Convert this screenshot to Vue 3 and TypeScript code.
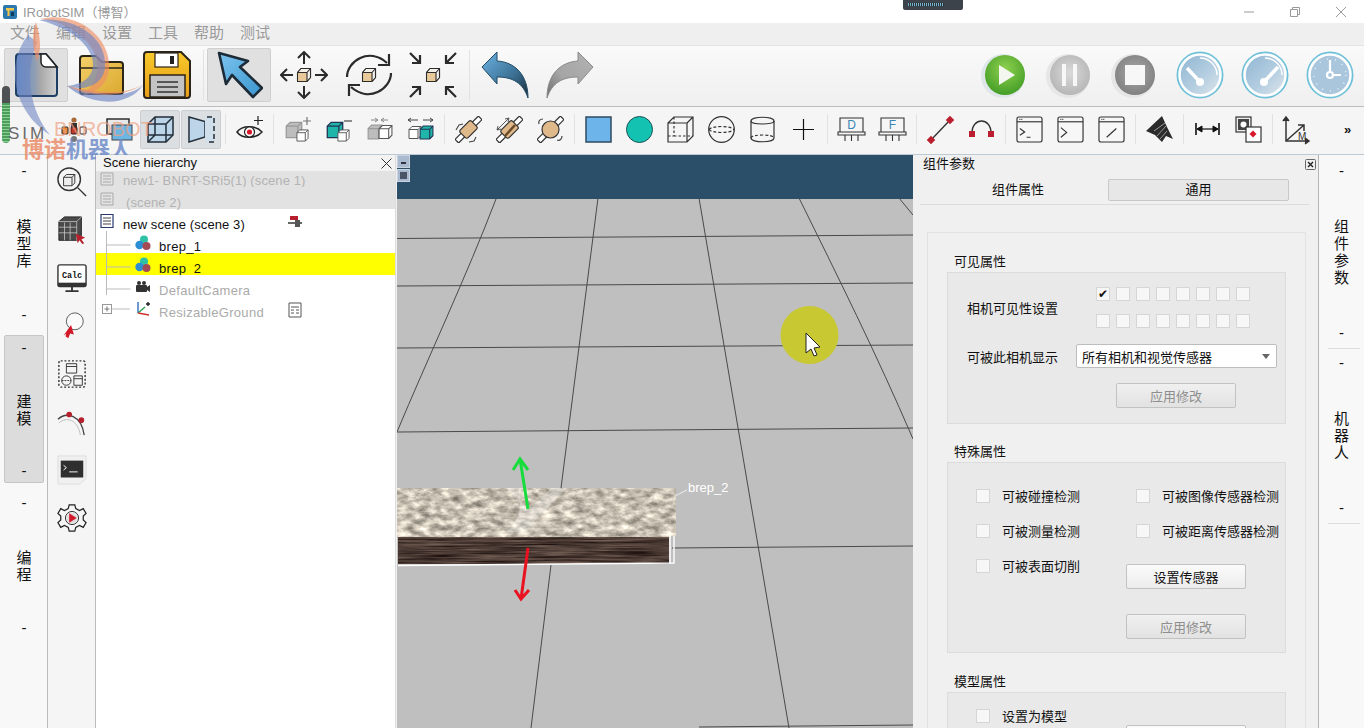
<script setup lang="ts">
const menus: string[] = ['文件', '编辑', '设置', '工具', '帮助', '测试']
const checks: number[] = Array.from({ length: 16 }, (_, i) => i)
</script>

<template>
  <div class="app">
    <svg class="defs" width="0" height="0" aria-hidden="true">
      <defs>
        <linearGradient id="gFile" x1="0" x2="1" y1="0" y2="0"><stop offset="0" stop-color="#5b8ec8"/><stop offset=".45" stop-color="#8f9db4"/><stop offset=".6" stop-color="#a8a8a8"/><stop offset="1" stop-color="#d2d2d2"/></linearGradient>
        <linearGradient id="gFolder" x1="0" x2="1" y1="0" y2="1"><stop offset="0" stop-color="#f4d06a"/><stop offset="1" stop-color="#dba92f"/></linearGradient>
        <linearGradient id="gSave" x1="0" x2="0" y1="0" y2="1"><stop offset="0" stop-color="#f7c92b"/><stop offset="1" stop-color="#e89d17"/></linearGradient>
        <linearGradient id="gArrow" x1="0" x2="1" y1="0" y2="1"><stop offset="0" stop-color="#7cc3ee"/><stop offset="1" stop-color="#3a96cf"/></linearGradient>
        <linearGradient id="gUndo" x1="0" x2="1" y1="0" y2="1"><stop offset="0" stop-color="#6db4e4"/><stop offset=".6" stop-color="#3a6f92"/><stop offset="1" stop-color="#1c2a36"/></linearGradient>
        <linearGradient id="gRedo" x1="1" x2="0" y1="0" y2="1"><stop offset="0" stop-color="#b3b3b3"/><stop offset=".6" stop-color="#a5a5a5"/><stop offset="1" stop-color="#6b6b6b"/></linearGradient>
        <radialGradient id="gPlay" cx=".5" cy=".35" r=".7"><stop offset="0" stop-color="#8ed04e"/><stop offset="1" stop-color="#3f9a24"/></radialGradient>
        <radialGradient id="gPause" cx=".5" cy=".45" r=".6"><stop offset="0" stop-color="#dadada"/><stop offset="1" stop-color="#b3b3b3"/></radialGradient>
        <radialGradient id="gStop" cx=".5" cy=".45" r=".6"><stop offset="0" stop-color="#a8a8a8"/><stop offset="1" stop-color="#7e7e7e"/></radialGradient>
        <linearGradient id="gGauge" x1="0" x2="1" y1="0" y2="1"><stop offset="0" stop-color="#8fb6d2"/><stop offset=".55" stop-color="#b3cde0"/><stop offset="1" stop-color="#dfe7ec"/></linearGradient>
        <filter id="marble" x="0" y="0" width="100%" height="100%" color-interpolation-filters="sRGB">
          <feTurbulence type="fractalNoise" baseFrequency="0.09 0.17" numOctaves="5" seed="7"/>
          <feColorMatrix values=".8 0 0 0 .38  .78 0 0 0 .36  .75 0 0 0 .32  0 0 0 0 1"/>
        </filter>
        <filter id="wood" x="0" y="0" width="100%" height="100%" color-interpolation-filters="sRGB">
          <feTurbulence type="fractalNoise" baseFrequency="0.015 0.55" numOctaves="4" seed="3"/>
          <feColorMatrix values=".55 0 0 0 .02  .5 0 0 0 -.02  .45 0 0 0 -.02  0 0 0 0 1"/>
        </filter>
        <symbol id="cube" viewBox="0 0 16 16">
          <path d="M1.500 5.500 5 1.500h9.500v9L11 14.500H1.500z" fill="#e9c99a" stroke="#2d2d2d" stroke-width="1.100" stroke-linejoin="round"/>
          <path d="M5 1.500h9.500L11 5.500H1.500zM11 5.500l3.500-4v9L11 14.500z" fill="#f4f0ea" stroke="#2d2d2d" stroke-width="1.100" stroke-linejoin="round"/>
        </symbol>
        <symbol id="greyCube" viewBox="0 0 14 14">
          <path d="M1 4 4 1h9v9l-3 3H1z" fill="#bdbdbd" stroke="#9a9a9a"/>
          <path d="M1 4h9v9M10 4l3-3" fill="none" stroke="#9a9a9a"/>
        </symbol>
        <symbol id="whiteCube" viewBox="0 0 14 14">
          <path d="M1 4 4 1h9v9l-3 3H1z" fill="#fff" stroke="#555"/>
          <path d="M1 4h9v9M10 4l3-3" fill="none" stroke="#555"/>
        </symbol>
        <symbol id="tealCube" viewBox="0 0 14 14">
          <path d="M1 4 4 1h9v9l-3 3H1z" fill="#1fb5a8" stroke="#235"/>
          <path d="M1 4h9v9M10 4l3-3" fill="none" stroke="#235"/>
        </symbol>
        <symbol id="brep" viewBox="0 0 16 16">
          <circle cx="9" cy="4.500" r="4" fill="#2fc0a8"/>
          <circle cx="4.500" cy="10" r="4.200" fill="#2c8fd6"/>
          <circle cx="11.500" cy="11" r="4" fill="#a34a55"/>
        </symbol>
        <symbol id="term" viewBox="0 0 28 28">
          <rect x="1" y="1" width="26" height="26" rx="2" fill="#f7f7f7" stroke="#333" stroke-width="1.200"/>
          <path d="M1 6h26" stroke="#333"/>
          <path d="M3.500 3.500h4" stroke="#333" stroke-dasharray="1 1"/>
        </symbol>
        <symbol id="shaft" viewBox="0 0 27 27">
          <g transform="rotate(-45 13.500 13.500)">
            <rect x="-3" y="11" width="33" height="5" rx="1" fill="#fff" stroke="#333" stroke-width="1.200"/>
          </g>
        </symbol>
      </defs>
    </svg>

    <header class="title-bar">
      <svg class="app-logo" viewBox="0 0 14 14"><rect width="14" height="14" rx="2" fill="#2a78ad"/><path d="M3 3h8v2.500H6.500V11H4.500V5.500H3z" fill="#f1c84a"/><path d="M8 7h3v4H8z" fill="#103a5c"/></svg>
      <span class="app-name">IRobotSIM（博智）</span>
      <div class="device">
        <span class="device-led"></span>
      </div>
      <div class="win-controls">
        <svg class="win-btn" viewBox="0 0 12 12"><path d="M1 6h10" stroke="#999"/></svg>
        <svg class="win-btn" viewBox="0 0 12 12"><path d="M3.500 3.500v-2h7v7h-2M1.500 3.500h7v7h-7z" fill="none" stroke="#999"/></svg>
        <svg class="win-btn" viewBox="0 0 12 12"><path d="M1 1l10 10M11 1 1 11" stroke="#999"/></svg>
      </div>
    </header>

    <nav class="menu-bar">
      <span v-for="m in menus" :key="m" class="menu-item">{{ m }}</span>
    </nav>

    <div class="toolbar-main">
      <button class="big active">
        <svg viewBox="0 0 48 48"><path d="M7 3h27l11 13v26a3 3 0 0 1-3 3H7a3 3 0 0 1-3-3V6a3 3 0 0 1 3-3z" fill="url(#gFile)" stroke="#1e3f63" stroke-width="2"/><path d="M29 3h5l11 13H34a5 5 0 0 1-5-5z" fill="#fff" stroke="#222" stroke-width="1.500"/></svg>
      </button>
      <button class="big plain folder">
        <svg viewBox="0 0 48 48"><path d="M3 8a3 3 0 0 1 3-3h13l6 6h18a3 3 0 0 1 3 3v26a3 3 0 0 1-3 3H6a3 3 0 0 1-3-3z" fill="url(#gFolder)" stroke="#2b2418" stroke-width="2"/><path d="M3 17h43" stroke="#2b2418" stroke-width="1.600"/></svg>
      </button>
      <button class="big plain save">
        <svg viewBox="0 0 48 48"><path d="M4 1h34l9 9v34a3 3 0 0 1-3 3H4a3 3 0 0 1-3-3V4a3 3 0 0 1 3-3z" fill="url(#gSave)" stroke="#2b2418" stroke-width="2"/><rect x="12" y="2" width="23" height="14" fill="#fff" stroke="#2b2418" stroke-width="1.200"/><rect x="27" y="5" width="4" height="8" fill="#222"/><rect x="7" y="24" width="35" height="22" fill="#c3c3c3" stroke="#2b2418" stroke-width="1.500"/><path d="M14 31h21M14 36h21M14 41h21" stroke="#333" stroke-width="1.300"/></svg>
      </button>
      <span class="vsep big-sep"></span>
      <button class="big active select">
        <svg viewBox="0 0 48 48"><path d="M3 2 32 10 24 16 46 37 37 46 16 24 10 33z" transform="translate(1 0)" fill="url(#gArrow)" stroke="#1d2b38" stroke-width="2.600" stroke-linejoin="round"/></svg>
      </button>
      <button class="big plain move">
        <svg viewBox="0 0 48 48" fill="none" stroke="#2b2b2b" stroke-width="2"><path d="M24 1v12M18 7l6-6 6 6M24 35v12M18 41l6 6 6-6M1 24h12M7 18l-6 6 6 6M35 24h12M41 18l6 6-6 6"/><use href="#cube" x="16" y="16" width="16" height="16"/></svg>
      </button>
      <button class="big plain rotate">
        <svg viewBox="0 0 48 48" fill="none" stroke="#2b2b2b" stroke-width="2.200"><path d="M2 26C2 10 24-4 42 12M46 22C46 38 24 52 6 36"/><path d="M44 3v11H33M4 45V34h11"/><use href="#cube" x="16" y="16" width="16" height="16"/></svg>
      </button>
      <button class="big plain scale">
        <svg viewBox="0 0 48 48" fill="none" stroke="#2b2b2b" stroke-width="2.200"><path d="M1 2 11 12M3 12h8V4M47 2 37 12M45 12h-8V4M1 46l10-10M3 36h8v8M47 46 37 36M45 36h-8v8"/><use href="#cube" x="16" y="16" width="16" height="16"/></svg>
      </button>
      <span class="vsep big-sep scale-sep"></span>
      <button class="big plain undo">
        <svg viewBox="0 0 48 48"><path d="M1 16 16 1v9C34 11 47 24 47 47 42 32 32 26 16 26v7z" fill="url(#gUndo)" stroke="#214a66"/></svg>
      </button>
      <button class="big plain redo">
        <svg viewBox="0 0 48 48"><path d="M47 16 32 1v9C14 11 1 24 1 47 6 32 16 26 32 26v7z" fill="url(#gRedo)" stroke="#8b8b8b"/></svg>
      </button>
      <div class="sim-controls">
        <svg class="ctl" viewBox="0 0 50 50"><circle cx="23" cy="26" r="22" fill="#dfe6ea"/><circle cx="25" cy="25" r="20" fill="url(#gPlay)"/><path d="M19 15 35 25 19 35z" fill="#f4f7f0"/></svg>
        <svg class="ctl" viewBox="0 0 50 50"><circle cx="23" cy="26" r="22" fill="#e6e6e6"/><circle cx="25" cy="25" r="20" fill="url(#gPause)"/><path d="M17 14h4v22h-4zM28 14h4v22h-4z" fill="#f7f7f7"/></svg>
        <svg class="ctl" viewBox="0 0 50 50"><circle cx="23" cy="26" r="22" fill="#e6e6e6"/><circle cx="25" cy="25" r="20" fill="url(#gStop)"/><rect x="15" y="15" width="20" height="20" fill="#f7f7f7"/></svg>
        <svg class="ctl" viewBox="0 0 50 50" fill="none"><circle cx="25" cy="25" r="23.500" fill="#6fc0d8"/><circle cx="25" cy="25" r="20.500" fill="url(#gGauge)" stroke="#fff" stroke-width="2.500"/><path d="M25 8a17 17 0 0 1 17 17" stroke="#fff" stroke-width="1.500"/><path d="M25 32 12 18" stroke="#fff" stroke-width="3.500"/><circle cx="25" cy="32" r="4" fill="#fff"/></svg>
        <svg class="ctl" viewBox="0 0 50 50" fill="none"><circle cx="25" cy="25" r="23.500" fill="#6fc0d8"/><circle cx="25" cy="25" r="20.500" fill="url(#gGauge)" stroke="#fff" stroke-width="2.500"/><path d="M25 8a17 17 0 0 1 17 17" stroke="#fff" stroke-width="1.500"/><path d="M24 32 38 17" stroke="#fff" stroke-width="3.500"/><circle cx="24" cy="32" r="4" fill="#fff"/></svg>
        <svg class="ctl" viewBox="0 0 50 50" fill="none"><circle cx="25" cy="25" r="23.500" fill="#6fc0d8"/><circle cx="25" cy="25" r="20.500" fill="#a9c6dc" stroke="#fff" stroke-width="2.500"/><path d="M25 10v12M28 25h8" stroke="#fff" stroke-width="2.200"/><circle cx="25" cy="25" r="3" stroke="#fff" stroke-width="2.200"/><circle cx="25" cy="25" r="16" stroke="#e8f2f8" stroke-width="1.500" stroke-dasharray="1 7"/></svg>
      </div>
    </div>

    <div class="toolbar-icons">
      <div class="cell parts">
        <svg viewBox="0 0 27 27"><circle cx="13" cy="4" r="2.600" fill="#a86b3c"/><rect x="10" y="7" width="6" height="6" fill="#333"/><rect x="1" y="11" width="6" height="7" rx="1" fill="#e8893a" stroke="#222"/><rect x="10" y="11" width="6" height="7" rx="1" fill="#c0392b" stroke="#222"/><rect x="19" y="11" width="6" height="7" rx="1" fill="#f0f0f0" stroke="#222"/><circle cx="13" cy="23" r="3" fill="#777"/></svg>
      </div>
      <div class="cell">
        <svg viewBox="0 0 27 27"><rect x="1" y="3" width="22" height="15" fill="#e8e8e8" stroke="#222" stroke-width="1.400"/><rect x="6" y="9" width="20" height="15" fill="#6cb6e4" stroke="#444"/></svg>
      </div>
      <div class="cell on">
        <svg viewBox="0 0 27 27" fill="none" stroke="#222e3a" stroke-width="1.500"><path d="M1 8 8 1h18v18l-7 7H1z" fill="#bcd5e8"/><path d="M1 8h18v18M19 8l7-7M8 1v18H1M8 19h18M8 19l-7 7"/></svg>
      </div>
      <div class="cell on">
        <svg viewBox="0 0 27 27" fill="none" stroke="#222e3a" stroke-width="1.500"><path d="M1 1 17 5.500v15.500L1 26z" fill="#bcd5e8"/><rect x="17" y="1" width="9" height="25" fill="#cfe0ec" stroke="none"/><path d="M19 1h7v25h-7" stroke-dasharray="5 3"/></svg>
      </div>
      <span class="vsep"></span>
      <div class="cell">
        <svg viewBox="0 0 27 27" fill="none"><path d="M1 16C6 9 20 9 26 16 20 23 6 23 1 16z" stroke="#222" stroke-width="1.500"/><circle cx="13.500" cy="16" r="5" fill="#fff" stroke="#222" stroke-width="1.200"/><circle cx="13.500" cy="16" r="2.600" fill="#d8182a"/><path d="M22 0v9M18 4.500h9" stroke="#222" stroke-width="1.200"/></svg>
      </div>
      <span class="vsep"></span>
      <div class="cell"><svg viewBox="0 0 27 27" fill="none"><use href="#greyCube" x="1" y="5" width="18" height="18"/><use href="#whiteCube" x="12" y="13" width="13" height="13"/><path d="M23 1v8M19 5h8" stroke="#777" stroke-width="1.200"/></svg></div>
      <div class="cell"><svg viewBox="0 0 27 27" fill="none"><use href="#tealCube" x="1" y="5" width="18" height="18"/><use href="#whiteCube" x="12" y="13" width="13" height="13"/><path d="M19 5h8" stroke="#444" stroke-width="1.200"/></svg></div>
      <div class="cell"><svg viewBox="0 0 27 27" fill="none"><use href="#greyCube" x="1" y="8" width="16" height="16"/><use href="#whiteCube" x="12" y="8" width="15" height="16"/><path d="M5 4h7M9 2l3 2-3 2M22 4h-7M18 2l-3 2 3 2" stroke="#888"/></svg></div>
      <div class="cell"><svg viewBox="0 0 27 27" fill="none"><use href="#whiteCube" x="1" y="9" width="14" height="15"/><use href="#tealCube" x="12" y="9" width="15" height="15"/><path d="M1 4h10M4 2 1 4l3 2M16 4h10M23 2l3 2-3 2" stroke="#444"/></svg></div>
      <span class="vsep"></span>
      <div class="cell"><svg viewBox="0 0 27 27" fill="none"><use href="#shaft" width="27" height="27"/><rect x="5.500" y="8" width="16" height="11" rx="2" fill="#e0b98a" stroke="#333" stroke-width="1.200" transform="rotate(-45 13.500 13.500)"/><path d="M1 14l3-5 4-1M14 26l5-1 2-4" stroke="#444" stroke-width="1.100"/></svg></div>
      <div class="cell"><svg viewBox="0 0 27 27" fill="none"><use href="#shaft" width="27" height="27"/><rect x="5.500" y="8" width="16" height="11" rx="2" fill="#e0b98a" stroke="#333" stroke-width="1.200" transform="rotate(-45 13.500 13.500)"/><path d="M9 20 19 9" stroke="#6a4a28" stroke-width="2.500"/><path d="M1 14 13 2M1 14l1-4M1 14l4-1M13 2l-4 1M13 2l-1 4" stroke="#555"/></svg></div>
      <div class="cell"><svg viewBox="0 0 27 27" fill="none"><use href="#shaft" width="27" height="27"/><circle cx="13.500" cy="13.500" r="8.500" fill="#e0b98a" stroke="#333" stroke-width="1.200"/><path d="M2 8C1 5 3 3 6 3M20 24c3 1 5-1 5-4" stroke="#444" stroke-width="1.200"/></svg></div>
      <span class="vsep"></span>
      <div class="cell"><svg viewBox="0 0 27 27"><rect x="1" y="1" width="25" height="25" fill="#6cb4ea" stroke="#2e4a60" stroke-width="1.500"/></svg></div>
      <div class="cell"><svg viewBox="0 0 27 27"><circle cx="13.500" cy="13.500" r="13" fill="#14c2b2" stroke="#1f4f55" stroke-width="1"/></svg></div>
      <div class="cell"><svg viewBox="0 0 27 27" fill="none" stroke="#333" stroke-width="1.200"><path d="M1 7 7 1h19v19l-6 6H1zM1 7h19v19M20 7l6-6"/><path d="M7 1v19H1M7 20h19" stroke-dasharray="2.500 2"/></svg></div>
      <div class="cell"><svg viewBox="0 0 27 27" fill="none" stroke="#333" stroke-width="1.200"><circle cx="13.500" cy="13.500" r="12.800"/><path d="M1 13.500c3 4 22 4 25 0M1 13.500c3-4 22-4 25 0" stroke-dasharray="3 2"/></svg></div>
      <div class="cell"><svg viewBox="0 0 27 27" fill="none" stroke="#333" stroke-width="1.200"><path d="M2 5c0-5 23-5 23 0v17c0 5-23 5-23 0z"/><path d="M2 5c0 4 23 4 23 0"/><path d="M2 22c0-4 23-4 23 0" stroke-dasharray="3 2"/></svg></div>
      <div class="cell"><svg viewBox="0 0 27 27"><path d="M3 13.500h21M13.500 3v21" stroke="#111" stroke-width="1.200"/></svg></div>
      <span class="vsep"></span>
      <div class="cell"><svg viewBox="0 0 27 27" fill="none" stroke="#333" stroke-width="1.100"><path d="M2 2h23v14H2zM0 16h27v3H0zM7 19v6M13.500 19v6M20 19v6"/><text x="13.500" y="13" text-anchor="middle" class="chip" stroke="none">D</text></svg></div>
      <div class="cell"><svg viewBox="0 0 27 27" fill="none" stroke="#333" stroke-width="1.100"><path d="M2 2h23v14H2zM0 16h27v3H0zM7 19v6M13.500 19v6M20 19v6"/><text x="13.500" y="13" text-anchor="middle" class="chip" stroke="none">F</text></svg></div>
      <span class="vsep"></span>
      <div class="cell"><svg viewBox="0 0 27 27"><path d="M4 24 23 4" stroke="#333" stroke-width="1.400"/><rect x="1" y="21" width="6" height="6" fill="#bb1f2f" transform="rotate(45 4 24)"/><rect x="20" y="1" width="6" height="6" fill="#bb1f2f" transform="rotate(45 23 4)"/></svg></div>
      <div class="cell"><svg viewBox="0 0 27 27" fill="none"><path d="M4 17C4 1 23 1 23 17" stroke="#333" stroke-width="1.400"/><rect x="1" y="15" width="6" height="6" fill="#bb1f2f"/><rect x="20" y="15" width="6" height="6" fill="#bb1f2f"/></svg></div>
      <span class="vsep"></span>
      <div class="cell"><svg viewBox="0 0 28 28" fill="none" stroke="#333" stroke-width="1.200"><use href="#term" width="28" height="28"/><path d="M4 13l5 3.500-5 3.500M11 22h4"/></svg></div>
      <div class="cell"><svg viewBox="0 0 28 28" fill="none" stroke="#333" stroke-width="1.200"><use href="#term" width="28" height="28"/><path d="M4 12l6 5-6 5"/></svg></div>
      <div class="cell"><svg viewBox="0 0 28 28" fill="none" stroke="#333" stroke-width="1.200"><use href="#term" width="28" height="28"/><path d="M9 22l10-9"/></svg></div>
      <span class="vsep"></span>
      <div class="cell"><svg viewBox="0 0 27 27"><path d="M0 15 16 0l5 11 6 12-7-3-4 6-7-7z" fill="#2b2b2b"/><path d="M8 15l11-8M11 20l9-10M14 23l7-8" stroke="#999" stroke-width="1"/></svg></div>
      <span class="vsep"></span>
      <div class="cell"><svg viewBox="0 0 27 27" fill="none" stroke="#111"><path d="M2 7v12M25 7v12" stroke-width="1.600"/><path d="M3 13h21" stroke-width="1.200"/><path d="M3 13l5-3v6zM24 13l-5-3v6z" fill="#111"/></svg></div>
      <div class="cell"><svg viewBox="0 0 27 27" fill="none"><rect x="1" y="1" width="15" height="15" fill="#eee" stroke="#333" stroke-width="1.200"/><rect x="3" y="3" width="11" height="11" fill="#444"/><circle cx="8.500" cy="8.500" r="3" fill="#fff"/><rect x="11" y="11" width="15" height="15" fill="#fff" stroke="#333" stroke-width="1.200"/><rect x="15.500" y="15.500" width="5" height="5" fill="#d8182a" transform="rotate(45 18 18)"/></svg></div>
      <span class="vsep"></span>
      <div class="cell"><svg viewBox="0 0 27 27" fill="none" stroke="#333" stroke-width="1.500"><path d="M3 2v23h22"/><path d="M0 5l3-4 3 4M22 22l4 3-4 3" fill="#333"/><path d="M3 25 21 9M15 9h6v6"/><text x="15" y="24" class="chip dark" stroke="none">M</text></svg></div>
      <span class="more">»</span>
    </div>

    <div class="watermark" aria-hidden="true">
      <svg class="swoosh" viewBox="0 0 150 170" width="150" height="170">
        <path d="M40 19C78 10 112 38 109 70 107 85 97 92 82 96 93 86 99 76 97 62 93 38 66 22 40 19z" fill="#ec8f66" opacity=".65"/>
        <path d="M39 20C72 16 108 36 105 68 103 84 86 92 67 86 88 84 96 72 92 58 86 38 62 26 39 20z" fill="#6f86c3" opacity=".65"/>
        <path d="M67 86C90 92 125 102 143 85 128 108 90 106 67 86z" fill="#6f86c3" opacity=".65"/>
        <path d="M67 86C90 90 122 98 143 84 125 98 92 98 67 86z" fill="#ec8f66" opacity=".6"/>
        <path d="M28 35C4 66 14 112 50 135 30 110 24 75 37 42z" fill="#6f86c3" opacity=".6"/>
        <path d="M36 22C40 36 42 48 37 61 32 48 32 34 36 22z" fill="#ec8f66" opacity=".7"/>
      </svg>
      <div class="wm-meter"><span class="wm-dark"></span><span class="wm-green"></span></div>
      <span class="wm-sim">SIM</span>
      <span class="wm-brand">BNROBOT</span>
      <span class="wm-cn"><i class="or">博诺</i><i class="bl">机器人</i></span>
    </div>

    <main class="workspace">
      <aside class="left-tabs">
        <div class="vtab t1"><span>-</span><b>模型库</b><span>-</span></div>
        <div class="vtab t2 selected"><span>-</span><b>建模</b><span>-</span></div>
        <div class="vtab t3"><span>-</span><b>编程</b><span>-</span></div>
      </aside>

      <aside class="tool-col">
        <svg viewBox="0 0 32 32" fill="none" stroke="#333"><circle cx="13" cy="13" r="12" stroke-width="1.500"/><path d="M22 22l9 9" stroke-width="1.500"/><path d="M7 11l3-3h9v9l-3 3H7zM7 11h9v9M16 11l3-3" fill="#eee"/></svg>
        <svg viewBox="0 0 32 32"><path d="M2 7l6-5h18v20l-5 5H2z" fill="#4a4a4a" stroke="#222"/><path d="M8 8v19M14 8v19M2 13h19M2 19h19M21 7l5-5M2 7h19v20" stroke="#ccc" stroke-width=".8" fill="none"/><path d="M20 20l10 4-4 2 3 4-2 1-3-4-2 3z" fill="#b5202c"/></svg>
        <svg viewBox="0 0 32 32" fill="none"><rect x="1" y="2" width="30" height="23" rx="2" stroke="#333" stroke-width="1.500" fill="#fff"/><rect x="1" y="21" width="30" height="4" fill="#333"/><path d="M16 25v4M9 30h14" stroke="#333" stroke-width="2"/><text x="16" y="16" text-anchor="middle" class="calc">Calc</text></svg>
        <svg viewBox="0 0 32 32" fill="none"><circle cx="19" cy="11" r="9" stroke="#555" fill="#fafafa"/><path d="M7 26 15 15l3 10-4-1-2 5-3-2 1-3z" fill="#d3182a"/></svg>
        <svg viewBox="0 0 32 32" fill="none" stroke="#333"><rect x="2" y="2" width="28" height="28" rx="2" stroke-dasharray="2 2" stroke-width="1.500"/><path d="M10 5h11v10H10z"/><path d="M10 8h11"/><circle cx="10" cy="23" r="5"/><path d="M5 23h10" stroke-dasharray="2 1"/><path d="M18 18h9v10h-9z"/><path d="M18 21h9"/></svg>
        <svg viewBox="0 0 32 32" fill="none"><path d="M1 13C10 5 26 8 29 30" stroke="#444" stroke-width="1.400"/><path d="M2 17C10 10 22 13 25 30" stroke="#bbb"/><circle cx="13" cy="8" r="3" fill="#b5202c"/><circle cx="26" cy="14" r="3" fill="#b5202c"/></svg>
        <svg viewBox="0 0 32 32"><path d="M1 1h30v24l-7 6H1z" fill="#f0f0f0" stroke="#ddd"/><rect x="4" y="6" width="24" height="18" fill="#2f2f2f"/><path d="M7 11l3 2.500L7 16M13 18h9" stroke="#fff" fill="none"/></svg>
        <svg viewBox="0 0 32 32" fill="none"><path d="M13 2h6l1 4 4 2 4-2 3 5-3 3v4l3 3-3 5-4-2-4 2-1 4h-6l-1-4-4-2-4 2-3-5 3-3v-4L1 11l3-5 4 2 4-2z" stroke="#222" stroke-width="1.300"/><circle cx="16" cy="16" r="7" stroke="#222"/><circle cx="16" cy="16" r="5.500" fill="#ddd"/><path d="M13 11l8 5-8 5z" fill="#d3182a"/></svg>
      </aside>

      <section class="scene">
        <div class="scene-head">
          <span>Scene hierarchy</span>
          <svg class="scene-close" viewBox="0 0 11 11"><path d="M.5.500l10 10M10.500.500l-10 10" stroke="#333"/></svg>
        </div>
        <div class="tree">
          <svg class="tree-lines" width="40" height="130" viewBox="0 0 40 130">
            <path d="M10.500 0v64M10.500 14h24M10.500 36h24M10.500 58h24M16 78h18" stroke="#bbb" fill="none"/>
            <rect x="6.500" y="73.500" width="9" height="9" fill="#fff" stroke="#999"/>
            <path d="M8.500 78h5M11 75.500v5" stroke="#777"/>
          </svg>
          <div class="row dim grey first"><svg class="ic" viewBox="0 0 16 16" fill="none" stroke="#aaa"><path d="M2 2h12v12H2zM4 5h8M4 8h8M4 11h8"/></svg><span>new1- BNRT-SRi5(1) (scene 1)</span></div>
          <div class="row dim grey"><svg class="ic" viewBox="0 0 16 16" fill="none" stroke="#aaa"><path d="M2 2h12v12H2zM4 5h8M4 8h8M4 11h8"/></svg><span class="pad3">(scene 2)</span></div>
          <div class="row"><svg class="ic" viewBox="0 0 16 16" fill="none" stroke="#2a3a70" stroke-width="1.200"><path d="M2 1.500h12v13H2z"/><path d="M4 5h8M4 8h8M4 11h8" stroke="#444"/></svg><span>new scene (scene 3)</span><svg class="badge" viewBox="0 0 16 16"><rect x="3" y="2" width="8" height="4" fill="#b5202c"/><rect x="1" y="8" width="14" height="2" fill="#666"/><rect x="8" y="6" width="5" height="7" fill="#555"/></svg></div>
          <div class="row child above"><svg class="ic" viewBox="0 0 16 16"><use href="#brep" width="16" height="16"/></svg><span>brep_1</span></div>
          <div class="row child hit"><svg class="ic" viewBox="0 0 16 16"><use href="#brep" width="16" height="16"/></svg><span>brep_2</span></div>
          <div class="row child dim cover"><svg class="ic" viewBox="0 0 16 16"><rect x="1" y="6" width="11" height="7" rx="1" fill="#333"/><circle cx="4" cy="4" r="2" fill="#333"/><circle cx="9" cy="4" r="2" fill="#333"/><path d="M12 8l3-2v7l-3-2z" fill="#333"/></svg><span>DefaultCamera</span></div>
          <div class="row child dim"><svg class="ic" viewBox="0 0 16 16" fill="none" stroke-width="1.400"><path d="M3 12 3 1" stroke="#2a6fc0"/><path d="M3 12 10 6" stroke="#2aa050"/><path d="M3 12 14 14" stroke="#d03030"/><path d="M11 3h4M13 1v4" stroke="#222"/></svg><span>ResizableGround</span><svg class="badge" viewBox="0 0 16 16" fill="#fff" stroke="#555"><path d="M2 1h12v14H2z"/><path d="M4 5h8M4 8h3M9 8h3M4 11h3M9 11h3"/></svg></div>
        </div>
      </section>

      <section class="viewport">
        <svg class="world" viewBox="0 0 516 573" width="516" height="573">
          <rect x="0" y="0" width="516" height="573" fill="#bfbfbf"/>
          <rect x="0" y="0" width="516" height="44" fill="#2c4f69"/>
          <g stroke="#4a4a4a" fill="none" stroke-width="1">
            <path d="M0 83.500 516 80M0 131 516 128M0 193 516 190M0 277 516 273M275 393 516 391M302 572 516 570"/>
            <path d="M99 44C70 120 30 205 0 277"/>
            <path d="M201 43 164 333M154 410 134 573"/>
            <path d="M302 43 392 573"/>
            <path d="M402 43C440 120 480 200 516 284"/>
            <path d="M502 43 516 60"/>
          </g>
          <circle cx="412.500" cy="180" r="29" fill="#c8c832"/>
          <path d="M409 178v20l5-4 3 7 3-1-3-7 6-1z" fill="#fff" stroke="#222"/>
          <rect x="0" y="333" width="279" height="49" filter="url(#marble)"/>
          <path d="M110 333h14l-2 28-12 16h20l10-14 30-30h-16l-22 22z" fill="#fff" opacity=".3"/>
          <rect x="1" y="382" width="271" height="27" filter="url(#wood)"/>
          <path d="M1 410.500 277 408V381M273 381v27" stroke="#fff" stroke-width="1.400" fill="none"/>
          <path d="M278 341 290 335" stroke="#eee"/>
          <text x="291" y="337" class="lbl">brep_2</text>
          <path d="M131 354 123 304M116 315l7-11 8 11" stroke="#16dc3c" stroke-width="3" fill="none"/>
          <path d="M131 393 124 444M118 435l6 9 8-9" stroke="#ea1220" stroke-width="3" fill="none"/>
        </svg>
        <div class="view-btns">
          <span class="vbtn"><i class="dash"></i></span>
          <span class="vbtn"><i class="sq"></i></span>
        </div>
      </section>

      <section class="props">
        <div class="props-head">
          <span>组件参数</span>
          <svg class="props-close" viewBox="0 0 11 11"><rect x=".5" y=".5" width="10" height="10" rx="1" fill="#f0f0f0" stroke="#666"/><path d="M3 3l5 5M8 3 3 8" stroke="#222" stroke-width="1.400"/></svg>
        </div>
        <div class="tabs">
          <div class="tab">组件属性</div>
          <div class="tab cur">通用</div>
        </div>
        <div class="outer">
          <h4>可见属性</h4>
          <div class="box b1">
            <div class="line">
              <label class="lab l1">相机可见性设置</label>
              <div class="chk-grid">
                <span v-for="c in checks" :key="c" class="chk">{{ c === 0 ? '✔' : '' }}</span>
              </div>
            </div>
            <div class="line mt16">
              <label class="lab l2">可被此相机显示</label>
              <div class="combo"><span>所有相机和视觉传感器</span><i class="caret"></i></div>
            </div>
            <button class="btn off apply1">应用修改</button>
          </div>

          <h4 class="next">特殊属性</h4>
          <div class="box b2">
            <div class="col">
              <div class="opt"><span class="chk big-chk"></span>可被碰撞检测</div>
              <div class="opt"><span class="chk big-chk"></span>可被测量检测</div>
              <div class="opt"><span class="chk big-chk"></span>可被表面切削</div>
            </div>
            <div class="col">
              <div class="opt"><span class="chk big-chk"></span>可被图像传感器检测</div>
              <div class="opt"><span class="chk big-chk"></span>可被距离传感器检测</div>
              <button class="btn set">设置传感器</button>
              <button class="btn off apply2">应用修改</button>
            </div>
          </div>

          <h4 class="next n3">模型属性</h4>
          <div class="box b3">
            <div class="col">
              <div class="opt"><span class="chk big-chk"></span>设置为模型</div>
            </div>
            <div class="col"><button class="btn set model"></button></div>
          </div>
        </div>
      </section>

      <aside class="right-tabs">
        <div class="vtab r1"><span>-</span><b>组件参数</b><span>-</span></div>
        <hr />
        <div class="vtab r2"><span>-</span><b>机器人</b><span>-</span></div>
        <hr />
      </aside>
    </main>
  </div>
</template>

<style>
html, body { margin: 0; padding: 0; background: #fff; overflow: hidden; }
</style>

<style scoped>
* { box-sizing: border-box; }
.app { width: 1364px; height: 728px; overflow: hidden; position: relative; font-family: "Liberation Sans", "Noto Sans CJK SC", sans-serif; font-size: 13px; color: #111; background: #f0f0f0; }
.defs { position: absolute; }
button { font: inherit; padding: 0; }

.title-bar { height: 23px; background: #fff; display: flex; align-items: center; padding-left: 3px; position: relative; }
.app-logo { width: 14px; height: 14px; }
.app-name { margin-left: 6px; color: #999; font-size: 13px; }
.device { position: absolute; left: 903px; top: 0; width: 60px; height: 10px; background: #3c434b; border-radius: 0 0 2px 2px; padding: 3px 5px; }
.device-led { display: block; height: 3px; width: 36px; background: repeating-linear-gradient(90deg, #6fb3c9 0 1px, #2c3238 1px 2px); }
.win-controls { margin-left: auto; display: flex; padding-right: 17px; gap: 34px; align-items: center; height: 20px; }
.win-btn { width: 12px; height: 12px; }

.menu-bar { height: 20px; background: #efefef; display: flex; gap: 16px; padding-left: 10px; align-items: center; }
.menu-item { font-size: 15px; color: #9a9a9a; line-height: 20px; }

.toolbar-main { height: 62px; margin-top: 2px; border-top: 1px solid #e3e3e3; border-bottom: 1px solid #bdbdbd; background: linear-gradient(#fafafa, #efefef); display: flex; align-items: flex-start; padding-left: 4px; }
.big { width: 64px; height: 54px; margin-top: 2px; background: transparent; border: 0; display: flex; align-items: center; justify-content: center; flex: none; }
.big svg { width: 48px; height: 48px; }
.big.active { background: #e0e0e0; border: 1px solid #cfcfcf; border-radius: 2px; }
.big.plain { width: 48px; }
.folder { margin-left: 9px; }
.save { margin-left: 18px; }
.move { margin-left: 9px; }
.rotate, .redo { margin-left: 17px; }
.scale { margin-left: 16px; }
.vsep { display: block; width: 1px; height: 30px; margin: 0 3px; background: #e2e2e2; flex: none; align-self: center; }
.big-sep { height: 50px; margin: 4px 3px 0 12px; align-self: flex-start; }
.scale-sep { margin: 4px 0 0 12px; }
.undo { margin-left: 11px; }
.sim-controls { margin-left: auto; display: flex; gap: 15px; padding: 4px 9px 0 0; }
.ctl { width: 50px; height: 50px; }

.toolbar-icons { height: 48px; padding: 0 0 3px 54px; display: flex; align-items: center; background: #f5f5f5; border-bottom: 1px solid #bdc9d3; }
.cell { width: 41px; height: 39px; flex: none; display: flex; align-items: center; justify-content: center; }
.cell svg { width: 27px; height: 27px; overflow: visible; }
.cell.parts { margin-right: 4px; }
.cell.on { width: 40px; margin-right: 1px; background: #dcdfe1; border: 1px solid #cbcfd2; border-radius: 2px; }
.chip { font: 12px "Liberation Sans", sans-serif; fill: #3a85b5; }
.chip.dark { fill: #333; font-size: 10px; }
.more { margin-left: 27px; font: bold 13px "Liberation Sans", sans-serif; color: #111; }

.watermark { position: absolute; left: 0; top: 0; width: 150px; height: 170px; pointer-events: none; }
.swoosh { position: absolute; left: 0; top: 0; }
.wm-meter { position: absolute; left: 2px; top: 86px; width: 8px; height: 57px; border-radius: 4px; overflow: hidden; display: flex; flex-direction: column; }
.wm-dark { height: 17px; background: #4d5154; }
.wm-green { flex: 1; background: repeating-linear-gradient(#4c9f5b 0 2px, #8ccf96 2px 3px); }
.wm-sim { position: absolute; left: 8px; top: 126px; font-size: 17px; letter-spacing: 3px; color: #6b6b6b; line-height: 15px; }
.wm-brand { position: absolute; left: 54px; top: 120px; font-size: 20px; line-height: 18px; color: rgba(238, 160, 130, .7); }
.wm-cn { position: absolute; left: 22px; top: 141px; font-size: 22px; line-height: 18px; font-weight: 700; white-space: nowrap; }
.wm-cn i { font-style: normal; }
.or { color: rgba(235, 140, 105, .85); }
.bl { color: rgba(112, 140, 200, .85); }

.workspace { height: 573px; display: flex; align-items: stretch; }
.left-tabs { width: 48px; flex: none; background: #f8f8f8; border-right: 1px solid #bbb; padding: 8px 3px 0 4px; }
.vtab { display: flex; flex-direction: column; align-items: center; justify-content: space-between; font-size: 15px; }
.vtab span { line-height: 16px; height: 16px; }
.vtab b { font-weight: 400; width: 15px; line-height: 17px; word-break: break-all; text-align: center; }
.t1 { height: 160px; }
.t2 { height: 148px; margin-top: 12px; padding: 4px 0 3px; }
.t3 { height: 141px; margin-top: 12px; }
.selected { background: #dcdcdc; border: 1px solid #c6c6c6; border-radius: 2px; }

.tool-col { width: 48px; flex: none; background: #f5f5f5; border-right: 1px solid #bbb; padding-top: 12px; display: flex; flex-direction: column; align-items: center; gap: 18px; }
.tool-col svg { width: 30px; height: 30px; flex: none; }

.scene { width: 300px; flex: none; background: #fff; border-right: 1px solid #ddd; }
.scene-head { height: 16px; background: #f3f3f3; padding-left: 7px; line-height: 15px; font-size: 13px; position: relative; }
.scene-close { position: absolute; left: 285px; top: 3px; width: 11px; height: 11px; }
.tree { position: relative; }
.tree-lines { position: absolute; left: 0; top: 60px; z-index: 3; }
.row { height: 22px; display: flex; align-items: flex-start; padding: 4px 0 0 3px; gap: 8px; font-size: 13px; letter-spacing: .1px; position: relative; white-space: nowrap; }
.row span { line-height: 24px; height: 22px; }
.row .ic { width: 16px; height: 16px; flex: none; position: relative; }
.row.first { height: 16px; padding-top: 0; }
.row.first span { line-height: 20px; }
.row.child { padding-left: 39px; letter-spacing: .3px; }
.grey { background: #e2e2e2; }
.dim { color: #b3b3b3; }
.dim.child { color: #aaa; }
.pad3 { margin-left: 3px; }
.hit { background: #ffff00; z-index: 0; }
.above { z-index: 1; }
.cover { background: #fff; z-index: 1; }
.badge { position: absolute; left: 191px; top: 5px; width: 16px; height: 16px; }

.viewport { width: 517px; flex: none; background: #f0f0f0; padding-left: 1px; position: relative; overflow: hidden; }
.world { display: block; }
.lbl { font: 13px "Liberation Sans", sans-serif; fill: #fff; }
.view-btns { position: absolute; left: 1px; top: 0; display: flex; flex-direction: column; gap: 1px; }
.vbtn { width: 13px; height: 13px; background: #a9b9cf; border: 1px solid #c9d3e0; display: flex; align-items: center; justify-content: center; }
.dash { width: 5px; height: 2px; background: #334; margin-top: 3px; }
.sq { width: 7px; height: 7px; background: #4b5566; }

.props { width: 406px; flex: none; background: #f0f0f0; border-right: 1px solid #b5b5b5; position: relative; overflow: hidden; }
.props-head { height: 18px; padding-left: 10px; line-height: 18px; }
.props-close { position: absolute; left: 392px; top: 4px; width: 11px; height: 11px; }
.tabs { margin: 6px 9px 0 7px; height: 26px; display: flex; border-bottom: 1px solid #dcdcdc; align-items: flex-start; }
.tab { width: 188px; padding-left: 8px; height: 22px; line-height: 21px; text-align: center; }
.tab.cur { width: 181px; padding-left: 0; background: #e7e7e7; border: 1px solid #c8c8c8; border-radius: 2px; line-height: 20px; }
.outer { margin: 27px 0 0 14px; width: 379px; height: 600px; border: 1px solid #e2e2e2; padding-top: 19px; }
h4 { margin: 0 0 2px 26px; font-weight: 400; font-size: 13px; line-height: 19px; height: 18px; }
h4.next { margin-top: 18px; }
h4.n3 { margin-top: 19px; }
.box { margin-left: 19px; width: 339px; background: #e9e9e9; border: 1px solid #dcdcdc; padding-left: 19px; }
.b1 { height: 152px; padding-top: 14px; }
.b2 { height: 191px; padding: 15px 0 0 28px; display: flex; }
.b3 { height: 100px; padding: 5px 0 0 28px; display: flex; }
.line { display: flex; align-items: center; }
.mt16 { margin-top: 16px; }
.lab { flex: none; }
.l1 { width: 129px; }
.l2 { width: 109px; }
.chk-grid { display: grid; grid-template-columns: repeat(8, 14px); grid-auto-rows: 14px; column-gap: 6px; row-gap: 13px; }
.chk { width: 14px; height: 14px; background: #f7f7f7; border: 1px solid #d6d6d6; display: flex; align-items: center; justify-content: center; font-size: 12px; line-height: 1; color: #111; }
.big-chk { flex: none; margin-right: 12px; }
.combo { width: 201px; height: 24px; background: #fff; border: 1px solid #bdbdbd; border-radius: 2px; padding: 0 6px 0 5px; display: flex; align-items: center; justify-content: space-between; }
.caret { width: 0; height: 0; border: 4px solid transparent; border-top: 5px solid #666; border-bottom: 0; }
.btn { display: block; width: 120px; height: 25px; border: 1px solid #c2c2c2; border-radius: 2px; background: linear-gradient(#fbfbfb, #ececec); color: #111; }
.btn.off { background: linear-gradient(#f0f0f0, #e2e2e2); color: #8e8e8e; }
.apply1 { margin: 15px 0 0 149px; }
.col:first-child { width: 160px; flex: none; }
.opt { height: 35px; display: flex; align-items: center; white-space: nowrap; }
.set { margin: 16px 0 0 -10px; }
.apply2 { margin: 25px 0 0 -10px; }
.model { margin-top: 27px; }

.right-tabs { width: 45px; flex: none; background: #f8f8f8; }
.right-tabs .vtab { width: 45px; }
.r1 { height: 178px; margin-top: 8px; }
.r2 { height: 161px; }
hr { margin: 7px 4px 6px 9px; border: 0; height: 1px; background: #ddd; }
.calc { font: bold 9px "Liberation Mono", monospace; fill: #111; }
</style>
